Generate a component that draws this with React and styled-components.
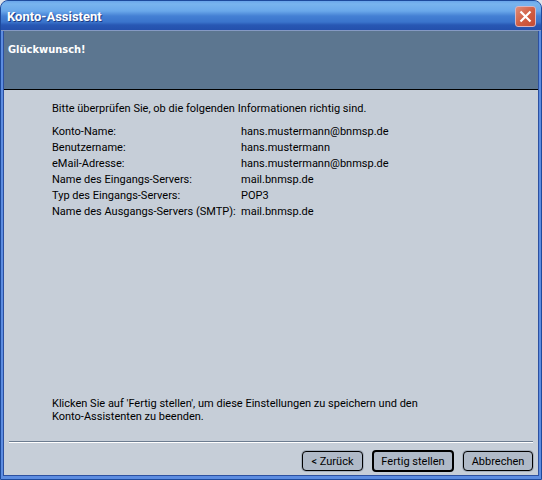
import React from 'react';
import styled, { createGlobalStyle } from 'styled-components';

const GlobalStyle = createGlobalStyle`
    * {
        box-sizing: border-box;
    }
    body {
        margin: 0;
        background: #dfe3ea;
    }
`;

const Frame = styled.div`
    display: flex;
    flex-direction: column;
    min-height: 100vh;
    padding: 0 2px 3px;
    border: 1px solid #1d4a9c;
    border-radius: 8px 8px 0 0;
    background: #5c8ce0;
    overflow: hidden;
    font: 11px/13px Roboto, sans-serif;
    color: #000;
`;

const TitleBar = styled.div`
    display: flex;
    align-items: center;
    justify-content: space-between;
    height: 30px;
    margin: 0 -2px;
    padding: 2px 5px 0 6px;
    border-bottom: 1px solid #8499c4;
    background: linear-gradient(#6aa6ea 0, #78b4ee 3px, #6aa8ea 10px, #4480d4 15px, #3a74cc 21px, #2858b4 24px, #2450ac 29px);
`;

const Title = styled.h1`
    margin: 0;
    font: bold 13px/16px Roboto, sans-serif;
    color: #fff;
    text-shadow: 1px 1px 0 #1c3c84;
`;

const CloseButton = styled.button`
    display: flex;
    align-items: center;
    justify-content: center;
    width: 21px;
    height: 21px;
    padding: 0;
    border: 1px solid #d8b4c0;
    border-radius: 3px;
    background: linear-gradient(135deg, #e08c78, #d05c40 55%, #c44c34);
`;

const Content = styled.main`
    display: flex;
    flex-direction: column;
    flex: 1;
    border: 1px solid #2c50a0;
    border-top: 0;
    background: #c6ced8;
`;

const Banner = styled.header`
    height: 59px;
    padding: 12px 4px;
    border-bottom: 1px solid #000;
    background: #5c7690;
`;

const BannerTitle = styled.h2`
    margin: 0;
    font: bold 11px/13px "DejaVu Sans Condensed", "DejaVu Sans", sans-serif;
    color: #fff;
`;

const Body = styled.div`
    display: flex;
    flex-direction: column;
    justify-content: space-between;
    flex: 1;
    padding: 12px 16px 18px 48px;
`;

const Text = styled.p`
    max-width: 376px;
    margin: 0;
`;

const InfoTable = styled.table`
    margin-top: 8px;
    border-collapse: collapse;
    text-align: left;
    th,
    td {
        height: 16px;
        padding: 0;
        font-weight: normal;
        white-space: nowrap;
    }
    th {
        width: 189px;
    }
`;

const Footer = styled.footer`
    display: flex;
    justify-content: flex-end;
    gap: 9px;
    margin: 0 5px;
    padding: 8px 0 3px;
    border-top: 1px solid #6c7c90;
    box-shadow: inset 0 1px 0 #fff;
`;

const Button = styled.button`
    height: ${props => (props.$primary ? 22 : 20)}px;
    align-self: center;
    padding: 0;
    width: ${props => props.$width}px;
    border: ${props => (props.$primary ? 2 : 1)}px solid #000;
    border-radius: 4px;
    background: #b0bac8;
    box-shadow: ${props => (props.$primary ? 'none' : '0 0 0 1px #a4aebc')};
    font: inherit;
    color: #000;
`;

const infos = [
    ['Konto-Name:', 'hans.mustermann@bnmsp.de'],
    ['Benutzername:', 'hans.mustermann'],
    ['eMail-Adresse:', 'hans.mustermann@bnmsp.de'],
    ['Name des Eingangs-Servers:', 'mail.bnmsp.de'],
    ['Typ des Eingangs-Servers:', 'POP3'],
    ['Name des Ausgangs-Servers (SMTP):', 'mail.bnmsp.de'],
];

const App = () => (
    <>
        <GlobalStyle />
        <Frame>
            <TitleBar>
                <Title>Konto-Assistent</Title>
                <CloseButton type="button" aria-label="Schließen">
                    <svg width="13" height="13" viewBox="0 0 13 13">
                        <path d="M1.5 1.5l10 10M11.5 1.5l-10 10" stroke="#fff" strokeWidth="2.2" />
                    </svg>
                </CloseButton>
            </TitleBar>
            <Content>
                <Banner>
                    <BannerTitle>Glückwunsch!</BannerTitle>
                </Banner>
                <Body>
                    <div>
                        <Text>Bitte überprüfen Sie, ob die folgenden Informationen richtig sind.</Text>
                        <InfoTable>
                            <tbody>
                                {infos.map(([label, value]) => (
                                    <tr key={label}>
                                        <th scope="row">{label}</th>
                                        <td>{value}</td>
                                    </tr>
                                ))}
                            </tbody>
                        </InfoTable>
                    </div>
                    <Text>
                        Klicken Sie auf 'Fertig stellen', um diese Einstellungen zu speichern und den
                        Konto-Assistenten zu beenden.
                    </Text>
                </Body>
                <Footer>
                    <Button type="button" $width={61}>&lt; Zurück</Button>
                    <Button type="button" $width={82} $primary>Fertig stellen</Button>
                    <Button type="button" $width={70}>Abbrechen</Button>
                </Footer>
            </Content>
        </Frame>
    </>
);

export default App;
